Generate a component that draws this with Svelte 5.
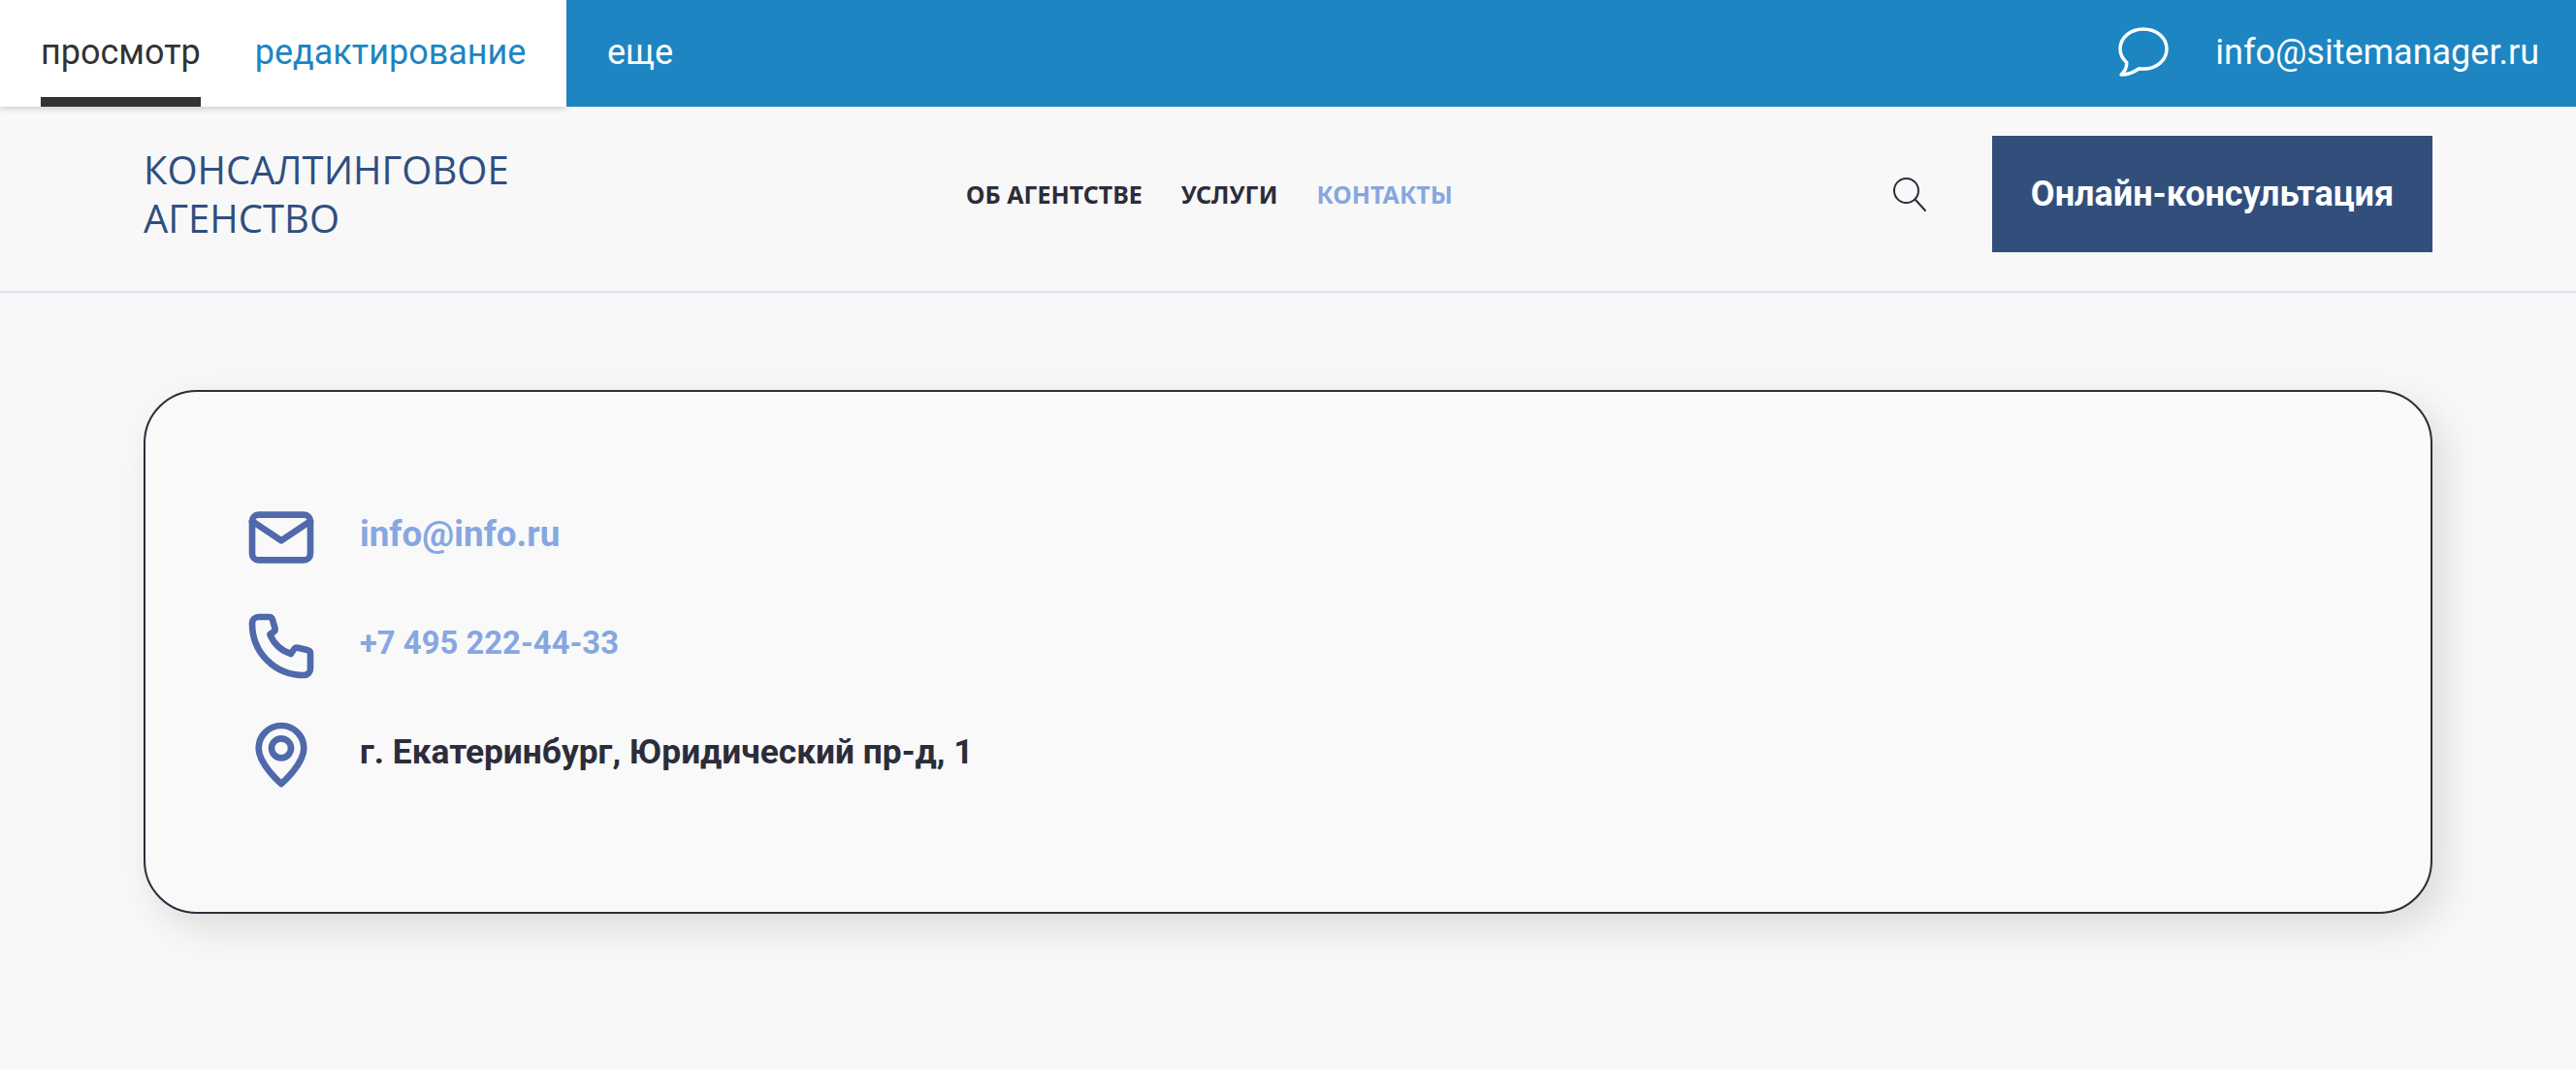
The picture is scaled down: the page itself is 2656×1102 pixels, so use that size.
<script lang="ts">
  const tabs = [
    { label: 'просмотр', active: true },
    { label: 'редактирование', active: false }
  ];
  const nav = [
    { label: 'Об агентстве', current: false },
    { label: 'Услуги', current: false },
    { label: 'Контакты', current: true }
  ];
</script>

<div class="topbar">
  <div class="tabs">
    {#each tabs as tab}
      <a class="tab" class:active={tab.active} href="#top">{tab.label}</a>
    {/each}
  </div>
  <div class="tools">
    <a class="more" href="#top">еще</a>
    <div class="account">
      <svg class="chat" viewBox="0 0 52 52" width="52" height="52" fill="none" stroke="#fff" stroke-width="3.5" stroke-linejoin="round" aria-hidden="true">
        <path d="M8.7 36.5C4.500 32.500 2 27.500 2 22.500 2 11 12.500 2 26 2s24 9 24 20.500S39.500 43 26 43c-1.500 0-3-.1-4.500-.3C16 46.500 10 49 3 49c3.500-3 6-7 5.700-12.500z" />
      </svg>
      <span class="email">info@sitemanager.ru</span>
    </div>
  </div>
</div>

<header class="site-header">
  <a class="logo" href="#top">КОНСАЛТИНГОВОЕ<br />АГЕНСТВО</a>
  <nav>
    {#each nav as item}
      <a class:current={item.current} href="#top">{item.label}</a>
    {/each}
  </nav>
  <div class="actions">
    <svg class="search" viewBox="0 0 36 36" width="36" height="36" fill="none" stroke="#2b2d3a" stroke-width="2" aria-hidden="true">
      <circle cx="14.5" cy="14.5" r="12.5" />
      <path d="M23.5 23.500 34 35" stroke-linecap="round" />
    </svg>
    <button type="button" class="cta">Онлайн-консультация</button>
  </div>
</header>

<main>
  <section class="card">
    <div class="row">
      <svg viewBox="0 0 24 24" aria-hidden="true">
        <rect x="3" y="5" width="18" height="14" rx="2" />
        <path d="M3 7l9 6 9-6" />
      </svg>
      <a class="mail" href="#top">info@info.ru</a>
    </div>
    <div class="row">
      <svg viewBox="0 0 24 24" aria-hidden="true">
        <path d="M3 5a2 2 0 0 1 2-2h3.300a1 1 0 0 1 .95.7l.8 2.800a1 1 0 0 1-.5 1.150L8.500 8.400a10.500 10.500 0 0 0 6.500 6l1-1.500a1 1 0 0 1 1.100-.4l3.200.8a1 1 0 0 1 .7.95V19a2 2 0 0 1-2 2C10 21 3 14 3 5z" />
      </svg>
      <a class="phone" href="#top">+7 495 222-44-33</a>
    </div>
    <div class="row">
      <svg viewBox="0 0 24 24" aria-hidden="true">
        <path d="M12 21s-7-6-7-11a7 7 0 0 1 14 0c0 5-7 11-7 11z" />
        <circle cx="12" cy="10" r="3" />
      </svg>
      <span>г. Екатеринбург, Юридический пр-д, 1</span>
    </div>
  </section>
</main>

<style>
  :global(body) {
    background: #f8f8f8;
    font-family: Roboto, sans-serif;
  }

  a {
    text-decoration: none;
  }

  .topbar {
    display: flex;
    height: 110px;
    position: relative;
    font-size: 36px;
  }

  .tabs {
    display: flex;
    gap: 56px;
    width: 584px;
    padding-left: 42px;
    box-sizing: border-box;
    background: #fff;
    box-shadow: 0 2px 6px rgba(0, 0, 0, 0.18);
  }

  .tab {
    display: flex;
    align-items: center;
    height: 110px;
    box-sizing: border-box;
    padding-bottom: 2px;
    color: #1d85c2;
  }

  .tab.active {
    color: #333;
    border-bottom: 10px solid #333;
    padding-top: 8px;
    padding-bottom: 0;
  }

  .tools {
    flex: 1;
    display: flex;
    align-items: center;
    justify-content: space-between;
    padding: 0 38px 2px 42px;
    background: #1d85c2;
    color: #fff;
  }

  .more {
    color: #fff;
  }

  .account {
    display: flex;
    align-items: center;
    gap: 48px;
  }

  .chat {
    display: block;
  }

  .site-header {
    display: flex;
    align-items: center;
    height: 192px;
    padding: 0 148px 10px;
    box-sizing: border-box;
    border-bottom: 2px solid #dde3f3;
    position: relative;
  }

  .logo {
    width: 848px;
    font: 400 40px/50px "Open Sans", sans-serif;
    color: #2f4f80;
  }

  nav {
    flex: 1;
    display: flex;
    gap: 40px;
    font: 700 25px/1 "Noto Sans", sans-serif;
    text-transform: uppercase;
  }

  nav a {
    color: #2b2d3a;
  }

  nav a.current {
    color: #86a7e0;
  }

  .actions {
    display: flex;
    align-items: center;
    gap: 67px;
  }

  .search {
    display: block;
  }

  .cta {
    width: 454px;
    height: 120px;
    border: 0;
    background: #324f7c;
    color: #fff;
    font: 700 36px Roboto, sans-serif;
  }

  main {
    padding: 100px 148px 160px;
  }

  .card {
    display: flex;
    flex-direction: column;
    gap: 32px;
    height: 540px;
    box-sizing: border-box;
    padding: 110px 100px 0;
    background: #f9f9fa;
    border: 2px solid #2b2d3a;
    border-radius: 55px;
    box-shadow: 12px 14px 40px rgba(0, 0, 0, 0.12);
  }

  .row {
    display: flex;
    align-items: center;
    gap: 41px;
    height: 80px;
    font: 700 35.3px Roboto, sans-serif;
    color: #2b2d3a;
  }

  .row a,
  .row span {
    margin-bottom: 6px;
  }

  .row a {
    color: #86a7e0;
  }

  .row .mail {
    font-size: 36.8px;
    margin-bottom: 8px;
  }

  .row .phone {
    font-size: 32.8px;
  }

  .row svg {
    width: 80px;
    height: 80px;
    flex: none;
    fill: none;
    stroke: #4f69aa;
    stroke-width: 2;
    stroke-linejoin: round;
    stroke-linecap: round;
  }
</style>
